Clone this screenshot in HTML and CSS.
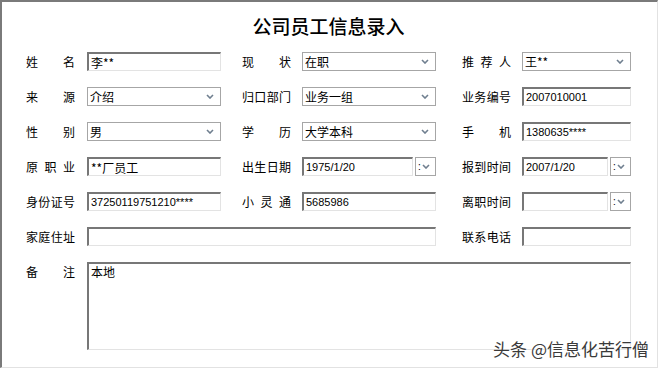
FILE: index.html
```html
<!DOCTYPE html>
<html lang="zh-CN">
<head>
    <meta charset="UTF-8">
    <title>公司员工信息录入</title>
    <link rel="stylesheet" href="styles.css">
</head>
<body>
    <div class="window">
        <h1 class="title">公司员工信息录入</h1>
        <form class="form-grid">
            <label class="field-label">姓名</label>
            <input class="field" type="text" value="李**">
            <label class="field-label">现状</label>
            <div class="combo"><span>在职</span><svg class="chev" viewBox="0 0 8 5"><path d="M1 1 L4 4 L7 1" /></svg></div>
            <label class="field-label">推荐人</label>
            <div class="combo narrow"><span>王**</span><svg class="chev" viewBox="0 0 8 5"><path d="M1 1 L4 4 L7 1" /></svg></div>

            <label class="field-label">来源</label>
            <div class="combo"><span>介绍</span><svg class="chev" viewBox="0 0 8 5"><path d="M1 1 L4 4 L7 1" /></svg></div>
            <label class="field-label">归口部门</label>
            <div class="combo"><span>业务一组</span><svg class="chev" viewBox="0 0 8 5"><path d="M1 1 L4 4 L7 1" /></svg></div>
            <label class="field-label">业务编号</label>
            <input class="field narrow num" type="text" value="2007010001">

            <label class="field-label">性别</label>
            <div class="combo"><span>男</span><svg class="chev" viewBox="0 0 8 5"><path d="M1 1 L4 4 L7 1" /></svg></div>
            <label class="field-label">学历</label>
            <div class="combo"><span>大学本科</span><svg class="chev" viewBox="0 0 8 5"><path d="M1 1 L4 4 L7 1" /></svg></div>
            <label class="field-label">手机</label>
            <input class="field narrow num" type="text" value="1380635****">

            <label class="field-label">原职业</label>
            <input class="field" type="text" value="**厂员工">
            <label class="field-label">出生日期</label>
            <div class="date">
                <input class="field num" type="text" value="1975/1/20">
                <div class="date-btn"><span class="tick">:</span><svg class="chev" viewBox="0 0 8 5"><path d="M1 1 L4 4 L7 1" /></svg></div>
            </div>
            <label class="field-label">报到时间</label>
            <div class="date narrow">
                <input class="field num" type="text" value="2007/1/20">
                <div class="date-btn"><span class="tick">:</span><svg class="chev" viewBox="0 0 8 5"><path d="M1 1 L4 4 L7 1" /></svg></div>
            </div>

            <label class="field-label">身份证号</label>
            <input class="field num" type="text" value="37250119751210****">
            <label class="field-label">小灵通</label>
            <input class="field num" type="text" value="5685986">
            <label class="field-label">离职时间</label>
            <div class="date narrow">
                <input class="field num" type="text" value="">
                <div class="date-btn"><span class="tick">:</span><svg class="chev" viewBox="0 0 8 5"><path d="M1 1 L4 4 L7 1" /></svg></div>
            </div>

            <label class="field-label">家庭住址</label>
            <input class="field wide" type="text" value="">
            <label class="field-label">联系电话</label>
            <input class="field narrow" type="text" value="">

            <label class="field-label top">备注</label>
            <textarea class="field memo">本地</textarea>
        </form>
        <div class="watermark">头条 @信息化苦行僧</div>
    </div>
</body>
</html>
```

FILE: styles.css
```css
* {
    margin: 0;
    padding: 0;
    box-sizing: border-box;
}

body {
    width: 660px;
    height: 370px;
    background: #fff;
    font-family: "Noto Sans CJK SC", "Liberation Sans", sans-serif;
    color: #000;
}

.window {
    position: relative;
    width: 658px;
    height: 368px;
    border-top: 2px solid #7a7a7a;
    border-left: 2px solid #7a7a7a;
    border-right: 1px solid #e2e2e2;
    border-bottom: 1px solid #e2e2e2;
}

.title {
    height: 42px;
    padding-top: 5px;
    line-height: 37px;
    text-align: center;
    font-size: 19px;
    font-weight: 500;
    padding-right: 2px;
}

.form-grid {
    display: grid;
    grid-template-columns: 61px 155px 60px 160px 60px 109px;
    grid-auto-rows: 35px;
    align-items: center;
    padding-left: 24px;
}

.field-label {
    width: 49px;
    font-size: 12px;
    line-height: 19px;
    white-space: nowrap;
    text-align: justify;
    text-align-last: justify;
}

.field-label.top {
    align-self: start;
    margin-top: 8px;
}

.field {
    width: 134px;
    min-width: 0;
    height: 19px;
    padding: 0 2px;
    border: 1px solid #e3e3e3;
    border-top: 2px solid #777;
    border-left: 2px solid #777;
    background: #fff;
    font-family: "Noto Sans CJK SC", "Liberation Sans", sans-serif;
    font-size: 12px;
    line-height: 16px;
    color: #000;
    outline: none;
}

.field.num {
    font-family: "Liberation Sans", "Noto Sans CJK SC", sans-serif;
    font-size: 11px;
}

.field.narrow,
.combo.narrow,
.date.narrow {
    width: 109px;
}

.field.wide {
    width: 349px;
    grid-column: 2 / span 3;
}

.memo {
    grid-column: 2 / span 5;
    align-self: start;
    margin-top: 8px;
    width: 544px;
    height: 88px;
    resize: none;
    line-height: 15px;
    padding-top: 0;
    overflow: hidden;
}

.combo {
    display: flex;
    align-items: center;
    justify-content: space-between;
    width: 134px;
    height: 19px;
    padding: 0 6px 0 2px;
    border: 1px solid #a6a6a6;
    background: #fff;
    font-size: 12px;
}

.chev {
    width: 8px;
    height: 5px;
    fill: none;
    stroke: #6f7f8f;
    stroke-width: 1.6;
}

.date {
    display: flex;
    gap: 2px;
    width: 134px;
}

.date .field {
    flex: 1;
    width: auto;
}

.date-btn {
    display: flex;
    flex: none;
    align-items: center;
    justify-content: space-between;
    width: 21px;
    height: 19px;
    padding: 0 5px 0 2px;
    border: 1px solid #a6a6a6;
    background: #fff;
}

.tick {
    font-family: "Liberation Sans", sans-serif;
    font-size: 10px;
    line-height: 17px;
}

.watermark {
    position: absolute;
    right: 8px;
    bottom: 6px;
    font-size: 17px;
    color: #3a3a3a;
    text-shadow: 0 0 2px #fff, 0 0 2px #fff;
}
```
